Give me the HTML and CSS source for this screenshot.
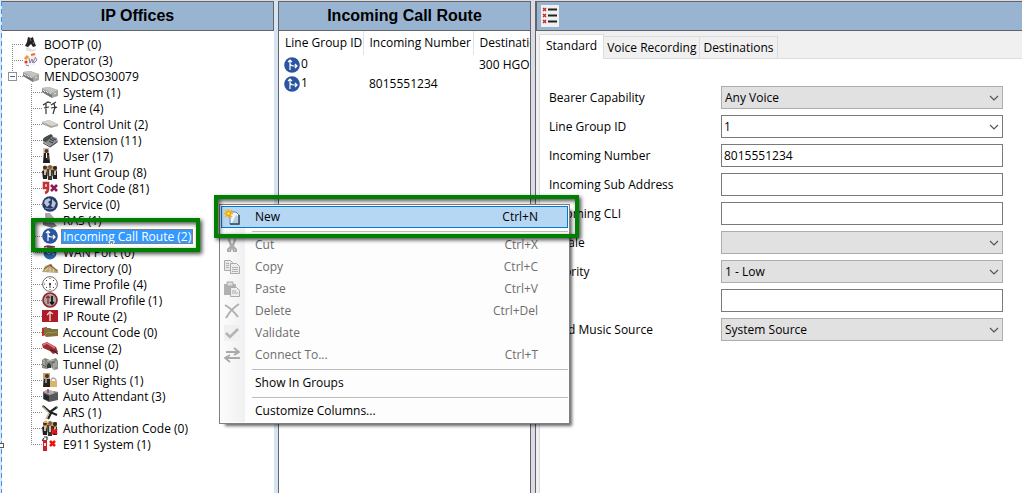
FILE: index.html
```html
<!DOCTYPE html>
<html lang="en">
<head>
<meta charset="utf-8">
<title>Incoming Call Route</title>
<link rel="stylesheet" href="styles.css">
</head>
<body>
<svg class="sprite" aria-hidden="true">
  <symbol id="bootp" viewBox="0 0 16 16"><path d="M5 1l3 1 2-1 1 4 2 5-3 1-2-3-3 3-3-1 2-4z" fill="#222"/><path d="M7 2l1 3M10 6l1 2" stroke="#777"/><path d="M3 12q2-2 4 0 3 3 6 0v2q-5 3-10 0z" fill="#e6e0d8"/></symbol>
  <symbol id="operator" viewBox="0 0 16 16"><path d="M1 14L3 6l9-5 3 5-3 7z" fill="#f4f1f4"/><path d="M2 7l3-3" stroke="#f39a1d" stroke-width="3"/><path d="M8 3l4-1" stroke="#f06a2c" stroke-width="2"/><circle cx="3" cy="10" r="1.600" fill="#e33"/><path d="M6 6l1 5 2-4 1 4 2-5M3 13l3 1" fill="none" stroke="#667" stroke-width=".8"/><path d="M12 5l2 3-3 3" fill="none" stroke="#9b7cc8"/></symbol>
  <symbol id="unit" viewBox="0 0 16 16"><path d="M0 4l7-1 9 3v6l-6 2-10-6z" fill="#a4a4a0"/><path d="M0 4l7-1 9 3-6 3z" fill="#c4c4bf"/><path d="M0 6l10 5v3L0 8z" fill="#777"/><path d="M1 6l2 2m1-1l2 2m1-1l2 2" stroke="#e5e5e5"/><path d="M12 10l2-1" stroke="#dfe8df"/></symbol>
  <symbol id="line" viewBox="0 0 16 16"><path d="M1 5l5-3 3 1M4 3v11M2 8l5-1M9 5l5-3M12 3l1 5 2-1M13 7l-2 7M9 8l5-1" fill="none" stroke="#333" stroke-width="1.200"/></symbol>
  <symbol id="control" viewBox="0 0 16 16"><path d="M0 6l7-2 9 4v2l-7 2-9-4z" fill="#aaa9a2"/><path d="M0 6l7-2 9 4-6 2z" fill="#d5d4cd"/></symbol>
  <symbol id="phone" viewBox="0 0 16 16"><path d="M1 10l6-7 8 3 1 4-7 5z" fill="#8c9193"/><path d="M1 9q-1-2 2-4l6-3 2 2-7 6z" fill="#444b4e"/><path d="M8 7l4 2M7 9l4 2M10 6l4 2" stroke="#333"/><path d="M1 11l7 4 7-5" fill="none" stroke="#444"/></symbol>
  <symbol id="user" viewBox="0 0 16 16"><path d="M1 0h6v15H1z" fill="#d9c9ad"/><circle cx="4.500" cy="3" r="2" fill="#5b3420"/><path d="M2 5h5l1 10H1z" fill="#1d1d22"/><path d="M4 5h1v5H4z" fill="#fff"/><path d="M6 7v5" stroke="#7c5a33"/></symbol>
  <symbol id="group" viewBox="0 0 16 16"><path d="M1 2h14v10H1z" fill="#c59c69"/><path d="M0 7l3-1 2 3v6H1zM10 6l5 1v8h-4z" fill="#222"/><path d="M5 5l5 1v10H6z" fill="#39352f"/><circle cx="3" cy="3.500" r="2" fill="#4d3020"/><circle cx="8" cy="3" r="2" fill="#806040"/><circle cx="13" cy="4" r="2" fill="#30251c"/><path d="M3 6v5M8 6v6M13 7v4" stroke="#f6f0e5" stroke-width="1.500"/></symbol>
  <symbol id="short" viewBox="0 0 16 16"><path d="M5 8H2V3h4v6q0 3-3 4" fill="none" stroke="#c23434" stroke-width="2.600"/><path d="M9 5l6 6M15 5l-6 6" stroke="#8d1c55" stroke-width="2.600"/></symbol>
  <symbol id="globe" viewBox="0 0 16 16"><circle cx="8" cy="8" r="7.800" fill="#27396c"/><path d="M3 4l4-2 2 2-3 2 2 2-3 3-3-4zM10 3l4 4-2 5-3-2 1-3z" fill="#bac5d1"/><path d="M3 12q5 2 9 0" stroke="#7890b5" fill="none"/></symbol>
  <symbol id="ras" viewBox="0 0 16 16"><path d="M3 1h5l4 5v5l-7-2z" fill="#aaa"/><path d="M1 10l11 1 3 3-5 2-9-3z" fill="#77777b"/><path d="M4 2v6l5 3" fill="none" stroke="#888"/></symbol>
  <symbol id="route" viewBox="0 0 16 16"><circle cx="8" cy="8" r="7.800" fill="#2b559f"/><path d="M6 13V3M4 5l2-2 2 2M6 6q0 3 4 3h3M11 7l2 2-2 2" fill="none" stroke="#fff" stroke-width="1.200"/></symbol>
  <symbol id="wan" viewBox="0 0 16 16"><circle cx="8" cy="9" r="6.500" fill="#2c67ad"/><path d="M2 3l4-1 7 1" stroke="#8c2830" stroke-width="1.500" fill="none"/><path d="M4 7l3 3 2-3 3 4" stroke="#b6d1e9" fill="none"/></symbol>
  <symbol id="directory" viewBox="0 0 16 16"><path d="M0 12l3-6 5-2 8 6v3z" fill="#b7a777"/><path d="M2 9l6-4 7 6" fill="none" stroke="#716343"/><path d="M3 11l3-3m2 4V8m3 4l1-3" stroke="#e5d9ad"/><path d="M8 5l2 1" stroke="#b34642" stroke-width="2"/></symbol>
  <symbol id="clock" viewBox="0 0 16 16"><circle cx="8" cy="8" r="7.400" fill="#fff" stroke="#776c62"/><path d="M8 2v1M8 13v1M2 8h1M13 8h1M4 4l1 1M11 5l1-1M4 12l1-1M11 11l1 1M8 7v5" stroke="#444"/><circle cx="8" cy="8" r="1" fill="#222"/></symbol>
  <symbol id="firewall" viewBox="0 0 16 16"><circle cx="8" cy="8" r="7" fill="#a4a9a7" stroke="#942630" stroke-width="1.700"/><path d="M6 12V4M4 6l2-2 2 2" stroke="#922" fill="none" stroke-width="1.200"/><path d="M10 4v8M8 10l2 2 2-2" stroke="#111" fill="none" stroke-width="1.700"/></symbol>
  <symbol id="ip" viewBox="0 0 16 16"><path d="M0 2h16v12H0z" fill="#ad1d27"/><path d="M8 13V5M5 7l3-3 3 2" stroke="#e8d8ce" fill="none" stroke-width="1.400"/></symbol>
  <symbol id="account" viewBox="0 0 16 16"><path d="M0 4l5-1v8l-5 1z" fill="#b92e27"/><path d="M2 4h6l2 1h6v7l-12 1-2-3z" fill="#80713a"/><path d="M3 11l3-3 3 1 6-1" stroke="#a49451" fill="none"/></symbol>
  <symbol id="license" viewBox="0 0 16 16"><path d="M0 4l5-2 9 5 2 5-5 2-3-3-7-3z" fill="#9c2c31"/><path d="M1 5l4-2 8 5" stroke="#df7778" stroke-width="1.500" fill="none"/><path d="M8 10l4 1 4 3" stroke="#4c2222" stroke-width="1.500" fill="none"/></symbol>
  <symbol id="tunnel" viewBox="0 0 16 16"><path d="M0 4l3-2 5 2 6-2 2 3v8l-4 1-3-3-4 2-5-1z" fill="#858981"/><path d="M5 12V9q2-4 4 0v3z" fill="#343a38"/><path d="M2 4v7M5 5l7-1M12 6v7M14 5v6" stroke="#bec0b7"/><path d="M1 9l3 2m6-4l3-1" stroke="#555b55"/></symbol>
  <symbol id="rights" viewBox="0 0 16 16"><path d="M1 1h7v14H1z" fill="#bea27b"/><circle cx="5" cy="4" r="2" fill="#4d2c1c"/><path d="M2 7h6v8H1z" fill="#24211f"/><path d="M4 7v4" stroke="#fff"/><path d="M9 10V8q2-4 5 0v2" fill="none" stroke="#aaa" stroke-width="1.300"/><path d="M8 9h7v6H8z" fill="#ddb26c"/></symbol>
  <symbol id="attendant" viewBox="0 0 16 16"><path d="M1 4l4-2 11 2v8l-9 2-6-3z" fill="#56595c"/><path d="M1 4l4-2 11 2-8 3z" fill="#aab0b1"/><path d="M2 6l5 2v5l-5-2z" fill="#242629"/><path d="M6 1v4" stroke="#d42a32" stroke-width="1.500"/><path d="M12 4l2 1" stroke="#d44"/></symbol>
  <symbol id="ars" viewBox="0 0 16 16"><path d="M1 2l8 7-3 6M8 8l7-5M8 8l7 3" stroke="#222" stroke-width="2.200" fill="none"/><path d="M0 2l6 6M7 9l-3 6" stroke="#c6b29a" stroke-width="1.500"/><path d="M0 2l2 1M14 4l2-1" stroke="#278943"/></symbol>
  <symbol id="cross" viewBox="0 0 16 16"><path d="M10 9l5 5M15 9l-5 5" stroke="#ed1111" stroke-width="2.300"/></symbol>
  <symbol id="auth" viewBox="0 0 16 16"><use href="#group"/><path d="M1 3l3-3 3 3" fill="#dfbd59"/><use href="#cross"/></symbol>
  <symbol id="e911" viewBox="0 0 16 16"><path d="M1 4h4v11H1z" fill="#c9202b"/><path d="M2 1h3v3M2 2L0 5" fill="none" stroke="#333" stroke-width="1.200"/><path d="M2 7h2v3H2z" fill="#eadfd4"/><path d="M8 5l5 5M13 5l-5 5" stroke="#ed1111" stroke-width="2.500"/></symbol>
  <symbol id="new" viewBox="0 0 16 16"><path d="M6 3h6l3 3v9H6z" fill="#edf5fc" stroke="#6683a0"/><path d="M8 14l4-8 3 2v7z" fill="#b8cde0"/><path d="M15 6v9H6" stroke="#34495e" stroke-width="1.500" fill="none"/><path d="M4.500 0v9M0 4.500h9M1 1l7 7M8 1L1 8" stroke="#ffb300" stroke-width="1.300"/><circle cx="4.500" cy="4.500" r="2" fill="#ffe44d" stroke="#f39300"/></symbol>
  <symbol id="cut" viewBox="0 0 16 16"><path d="M5 1l3 6 3-6 1 2-2 6 3 3v3h-4l-1-4-1 4H3v-3l3-3-2-6z" fill="#aaa"/><path d="M5 13h1M10 13h1" stroke="#eee"/></symbol>
  <symbol id="copy" viewBox="0 0 16 16"><path d="M.5 1.500h6l2 2v8h-8z" fill="#e8e8e8" stroke="#aaa"/><path d="M6.500 4.500h6l3 3v7h-9z" fill="#ededed" stroke="#aaa"/><path d="M2 4.500h3M2 6.500h3M2 8.500h3M8 8.500h6M8 10.500h6M8 12.500h6" stroke="#b0b0b0"/></symbol>
  <symbol id="paste" viewBox="0 0 16 16"><path d="M0 3h12v11H0z" fill="#b1b1b1"/><path d="M3 1h6v4H3z" fill="#ddd" stroke="#aaa"/><path d="M6.500 6.500h6l3 3v6h-9z" fill="#ededed" stroke="#aaa"/><path d="M8 10h4M8 12h6" stroke="#aaa"/></symbol>
  <symbol id="delete" viewBox="0 0 16 16"><path d="M1 2q7 4 13 12M15 1Q7 6 2 15" fill="none" stroke="#b0b0b0" stroke-width="2"/></symbol>
  <symbol id="check" viewBox="0 0 16 16"><path d="M0 0h16v16H0z" fill="#f0f0f0"/><path d="M2 8l4 4 8-8" fill="none" stroke="#b4b4b4" stroke-width="2.600"/></symbol>
  <symbol id="connect" viewBox="0 0 16 16"><path d="M2 5h13M10 1l5 4-5 3M16 11H1M6 8l-5 3 5 4" fill="none" stroke="#aaa" stroke-width="1.800"/></symbol>
  <symbol id="chevron" viewBox="0 0 10 6"><path d="M1 1l4 4 4-4" fill="none" stroke="#555" stroke-width="1.200"/></symbol>
</svg>

<div class="app">
  <div class="edge"><span class="handle"></span></div>
  <nav class="offices">
    <h2 class="title">IP Offices</h2>
    <ul class="tree">
      <li class="node"><svg class="icon"><use href="#bootp"/></svg><span class="name">BOOTP (0)</span></li>
      <li class="node"><svg class="icon"><use href="#operator"/></svg><span class="name">Operator (3)</span></li>
      <li>
        <div class="node"><button class="toggle" type="button" aria-label="Collapse"></button><svg class="icon"><use href="#unit"/></svg><span class="name">MENDOSO30079</span></div>
        <ul class="branch">
          <li class="node"><svg class="icon"><use href="#unit"/></svg><span class="name">System (1)</span></li>
          <li class="node"><svg class="icon"><use href="#line"/></svg><span class="name">Line (4)</span></li>
          <li class="node"><svg class="icon"><use href="#control"/></svg><span class="name">Control Unit (2)</span></li>
          <li class="node"><svg class="icon"><use href="#phone"/></svg><span class="name">Extension (11)</span></li>
          <li class="node"><svg class="icon"><use href="#user"/></svg><span class="name">User (17)</span></li>
          <li class="node"><svg class="icon"><use href="#group"/></svg><span class="name">Hunt Group (8)</span></li>
          <li class="node"><svg class="icon"><use href="#short"/></svg><span class="name">Short Code (81)</span></li>
          <li class="node"><svg class="icon"><use href="#globe"/></svg><span class="name">Service (0)</span></li>
          <li class="node"><svg class="icon"><use href="#ras"/></svg><span class="name">RAS (1)</span></li>
          <li class="node"><svg class="icon"><use href="#route"/></svg><span class="name selected">Incoming Call Route (2)</span></li>
          <li class="node"><svg class="icon"><use href="#wan"/></svg><span class="name">WAN Port (0)</span></li>
          <li class="node"><svg class="icon"><use href="#directory"/></svg><span class="name">Directory (0)</span></li>
          <li class="node"><svg class="icon"><use href="#clock"/></svg><span class="name">Time Profile (4)</span></li>
          <li class="node"><svg class="icon"><use href="#firewall"/></svg><span class="name">Firewall Profile (1)</span></li>
          <li class="node"><svg class="icon"><use href="#ip"/></svg><span class="name">IP Route (2)</span></li>
          <li class="node"><svg class="icon"><use href="#account"/></svg><span class="name">Account Code (0)</span></li>
          <li class="node"><svg class="icon"><use href="#license"/></svg><span class="name">License (2)</span></li>
          <li class="node"><svg class="icon"><use href="#tunnel"/></svg><span class="name">Tunnel (0)</span></li>
          <li class="node"><svg class="icon"><use href="#rights"/></svg><span class="name">User Rights (1)</span></li>
          <li class="node"><svg class="icon"><use href="#attendant"/></svg><span class="name">Auto Attendant (3)</span></li>
          <li class="node"><svg class="icon"><use href="#ars"/></svg><span class="name">ARS (1)</span></li>
          <li class="node"><svg class="icon"><use href="#auth"/></svg><span class="name">Authorization Code (0)</span></li>
          <li class="node"><svg class="icon"><use href="#e911"/></svg><span class="name">E911 System (1)</span></li>
        </ul>
      </li>
    </ul>
  </nav>

  <section class="routes">
    <h2 class="title">Incoming Call Route</h2>
    <table class="list">
      <thead><tr><th class="col-id">Line Group ID</th><th class="col-number">Incoming Number</th><th>Destination</th></tr></thead>
      <tbody>
        <tr><td class="id"><svg class="icon"><use href="#route"/></svg>0</td><td></td><td>300 HGOP</td></tr>
        <tr><td class="id"><svg class="icon"><use href="#route"/></svg>1</td><td>8015551234</td><td></td></tr>
      </tbody>
    </table>
  </section>

  <main class="details">
    <div class="title toolbar">
      <button class="tool" type="button" aria-label="Errors"><svg class="tool-icon" viewBox="0 0 16 20"><path d="M1 2l3 3M4 2L1 5M1 8l3 3M4 8l-3 3M1 14l3 3M4 14l-3 3" stroke="#c22" stroke-width="1.300"/><path d="M6 3.500h9M6 9.500h9M6 15.500h9" stroke="#222" stroke-width="1.800"/></svg></button>
    </div>
    <div class="tabs" role="tablist">
      <button class="tab active" type="button" role="tab">Standard</button>
      <button class="tab" type="button" role="tab">Voice Recording</button>
      <button class="tab" type="button" role="tab">Destinations</button>
    </div>
    <form class="form">
      <label for="bearer">Bearer Capability</label>
      <div class="combo"><select class="field grey" id="bearer"><option>Any Voice</option></select><svg class="chevron"><use href="#chevron"/></svg></div>
      <label for="groupid">Line Group ID</label>
      <div class="combo"><select class="field" id="groupid"><option>1</option></select><svg class="chevron"><use href="#chevron"/></svg></div>
      <label for="number">Incoming Number</label>
      <input class="field" id="number" type="text" value="8015551234">
      <label for="sub">Incoming Sub Address</label>
      <input class="field" id="sub" type="text">
      <label for="cli">Incoming CLI</label>
      <input class="field" id="cli" type="text">
      <label for="locale">Locale</label>
      <div class="combo"><select class="field grey" id="locale"><option></option></select><svg class="chevron"><use href="#chevron"/></svg></div>
      <label for="priority">Priority</label>
      <div class="combo"><select class="field grey" id="priority"><option>1 - Low</option></select><svg class="chevron"><use href="#chevron"/></svg></div>
      <label for="tag">Tag</label>
      <input class="field" id="tag" type="text">
      <label for="music">Hold Music Source</label>
      <div class="combo"><select class="field grey" id="music"><option>System Source</option></select><svg class="chevron"><use href="#chevron"/></svg></div>
    </form>
  </main>
</div>

<div class="menu" role="menu">
  <button class="item hot" type="button" role="menuitem"><svg class="icon"><use href="#new"/></svg><span>New</span><span>Ctrl+N</span></button>
  <hr class="rule">
  <button class="item" type="button" role="menuitem" disabled><svg class="icon"><use href="#cut"/></svg><span>Cut</span><span>Ctrl+X</span></button>
  <button class="item" type="button" role="menuitem" disabled><svg class="icon"><use href="#copy"/></svg><span>Copy</span><span>Ctrl+C</span></button>
  <button class="item" type="button" role="menuitem" disabled><svg class="icon"><use href="#paste"/></svg><span>Paste</span><span>Ctrl+V</span></button>
  <button class="item" type="button" role="menuitem" disabled><svg class="icon"><use href="#delete"/></svg><span>Delete</span><span>Ctrl+Del</span></button>
  <button class="item" type="button" role="menuitem" disabled><svg class="icon"><use href="#check"/></svg><span>Validate</span></button>
  <button class="item" type="button" role="menuitem" disabled><svg class="icon"><use href="#connect"/></svg><span>Connect To...</span><span>Ctrl+T</span></button>
  <hr class="rule">
  <button class="item" type="button" role="menuitem"><i></i><span>Show In Groups</span></button>
  <hr class="rule">
  <button class="item" type="button" role="menuitem"><i></i><span>Customize Columns...</span></button>
</div>
<div class="mark mark-tree"></div>
<div class="mark mark-menu"></div>
</body>
</html>
```
FILE: styles.css
```css
* { box-sizing: border-box; }

body {
  margin: 0;
  background: #fff;
  color: #000;
  font: 12px/16px "Open Sans", "Noto Sans", sans-serif;
}

button, input, select { font: inherit; color: inherit; }

ul { margin: 0; padding: 0; list-style: none; }

.sprite { position: absolute; width: 0; height: 0; }

.app {
  display: grid;
  grid-template-columns: 2px 272px 257px 1fr;
  min-height: 100vh;
  padding-top: 1px;
  background: #dcdce8;
}

.edge {
  position: relative;
  background: repeating-linear-gradient(#3b94ee 0 5px, #dfe6f4 5px 8px) 1px 0 / 1px 100% no-repeat, #dfe6f4;
}

.handle {
  position: absolute;
  top: 442px;
  left: -2px;
  width: 6px;
  height: 5px;
  background: #fff;
  border: 1px solid #555;
}

.title {
  margin: 0;
  height: 30px;
  border: 1px solid #646464;
  background: #99b4d1;
  font: bold 16px/28px "Liberation Sans", sans-serif;
  text-align: center;
}

.offices { background: #fff; }
.offices .title { border-left: 0; }

.tree {
  margin-left: 10px;
  padding-top: 5px;
  background: repeating-linear-gradient(#888 0 1px, transparent 1px 2px) 0 13px / 1px 32px no-repeat;
}

.node {
  position: relative;
  display: flex;
  align-items: center;
  height: 16px;
  white-space: nowrap;
}

.node::before {
  content: "";
  width: 11px;
  height: 1px;
  background: repeating-linear-gradient(90deg, #888 0 1px, transparent 1px 2px);
}

.icon { flex: none; width: 16px; height: 16px; }

.name { padding: 0 2px; margin-left: 3px; line-height: 15px; }

.selected {
  background: #3399ff;
  color: #fff;
  outline: 1px dotted #c60;
  outline-offset: -1px;
}

.branch {
  margin-left: 19px;
  background: repeating-linear-gradient(#888 0 1px, transparent 1px 2px) 0 0 / 1px calc(100% - 8px) no-repeat;
}

.toggle {
  position: absolute;
  left: -4px;
  top: 4px;
  width: 9px;
  height: 9px;
  padding: 0;
  border: 1px solid #919191;
  background: linear-gradient(#4b63a7, #4b63a7) center / 5px 1px no-repeat, #fff;
}

.routes {
  background: #fff;
  border: solid #646464;
  border-width: 0 1px;
  margin-left: 4px;
  box-shadow: -4px 0 0 #d6e3f2;
}

.routes .title { border-width: 1px 0; }

.list {
  width: 100%;
  table-layout: fixed;
  border-collapse: collapse;
}

.list th, .list td {
  height: 19px;
  padding: 0 0 0 6px;
  overflow: hidden;
  white-space: nowrap;
  font-weight: normal;
  text-align: left;
}

.list th { height: 24px; border-right: 1px solid #e2e2e2; }
.list th:last-child { border-right: 0; }
.col-id { width: 84px; }
.col-number { width: 110px; }
.list .id { padding-left: 5px; }
.id .icon { margin-right: 1px; vertical-align: middle; }

.details {
  display: flex;
  flex-direction: column;
  margin-left: 4px;
  background: #f0f0f0;
  border-left: 1px solid #646464;
}

.toolbar { display: flex; padding: 3px 4px; border-right: 0; }

.tool {
  width: 18px;
  height: 22px;
  padding: 1px;
  border: 0;
  background: #f0f0f0;
}

.tool-icon { display: block; width: 16px; height: 20px; }

.tabs {
  display: flex;
  align-items: flex-end;
  height: 28px;
  padding-left: 3px;
}

.tab {
  height: 23px;
  padding: 0 3px;
  border: 1px solid #dcdcdc;
  border-left: 0;
  background: #f0f0f0;
}

.tab.active {
  height: 25px;
  padding: 0 6px 2px;
  border-left: 1px solid #dcdcdc;
  border-bottom: 0;
  background: #fff;
}

.tabs::after {
  content: "";
  flex: 1;
  border-bottom: 1px solid #dcdcdc;
}

.form {
  flex: 1;
  display: grid;
  grid-template-columns: 172px 1fr;
  grid-auto-rows: 23px;
  row-gap: 6px;
  align-items: center;
  margin-left: 3px;
  padding: 27px 19px 20px 9px;
  background: #fff;
  border-left: 1px solid #dcdcdc;
}

.field {
  width: 100%;
  height: 23px;
  margin: 0;
  padding: 0 2px;
  border: 1px solid #7a7a7a;
  border-radius: 0;
  background: #fff;
  appearance: none;
}

.field.grey { padding: 0 3px; background: #e1e1e1; border-color: #adadad; }

.combo { display: grid; align-items: center; }
.combo > * { grid-area: 1 / 1; }

.chevron {
  justify-self: end;
  width: 10px;
  height: 6px;
  margin-right: 4px;
  pointer-events: none;
}

.menu {
  position: absolute;
  left: 219px;
  top: 204px;
  width: 351px;
  padding: 1px;
  border: 1px solid #808080;
  background: linear-gradient(90deg, #fcfcfc, #f0f0f0) 1px 1px / 24px calc(100% - 2px) no-repeat, #fdfdfd;
  box-shadow: 4px 4px 3px -2px rgba(0, 0, 0, 0.6);
}

.item {
  display: grid;
  grid-template-columns: 16px 1fr auto;
  column-gap: 15px;
  align-items: center;
  width: 100%;
  height: 22px;
  padding: 0 29px 0 2px;
  border: 1px solid transparent;
  background: none;
  text-align: left;
}

.item:disabled { color: #6d6d6d; }
.item.hot { background: #b5d7f3; border-color: #0078d7; }

.rule {
  height: 1px;
  margin: 3px 0 2px 31px;
  border: 0;
  background: #bdbdbd;
}

.mark {
  position: absolute;
  border: 4px solid #008000;
  box-shadow: 2px 2px 4px rgba(0, 0, 0, 0.7), inset 2px 2px 4px rgba(0, 0, 0, 0.7);
  pointer-events: none;
}

.mark-tree { left: 31px; top: 218px; width: 169px; height: 34px; }
.mark-menu { left: 214px; top: 195px; width: 365px; height: 43px; }
```
